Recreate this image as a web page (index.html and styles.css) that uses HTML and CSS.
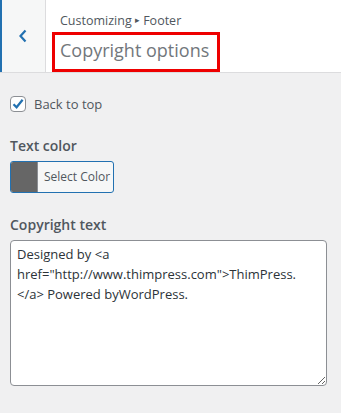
FILE: index.html
```html
<!DOCTYPE html>
<html lang="en">
<head>
    <meta charset="UTF-8">
    <title>Copyright options</title>
    <link rel="stylesheet" href="styles.css">
</head>
<body>
    <div class="section-header">
        <button class="back-btn" aria-label="Back">
            <svg width="10" height="14" viewBox="0 0 10 14"><path d="M7.5 1.5 L2.5 7 L7.5 12.5" fill="none" stroke="#2271b1" stroke-width="2.2"/></svg>
        </button>
        <div class="section-title">
            <span class="crumb">Customizing <span class="sep">&#9656;</span> Footer</span>
            <h3 class="title">Copyright options</h3>
        </div>
    </div>

    <div class="controls">
        <label class="check-row">
            <span class="checkbox">
                <svg width="14" height="14" viewBox="0 0 14 14"><path d="M2.5 7.2 L5.6 10.3 L11.6 2.8" fill="none" stroke="#2271b1" stroke-width="2.2"/></svg>
            </span>
            Back to top
        </label>

        <div class="control">
            <span class="control-title">Text color</span>
            <button class="color-btn">
                <span class="swatch"></span>
                <span class="color-label">Select Color</span>
            </button>
        </div>

        <div class="control">
            <span class="control-title">Copyright text</span>
            <textarea class="copy-text">Designed by &lt;a href="http://www.thimpress.com"&gt;ThimPress.&lt;/a&gt; Powered byWordPress.</textarea>
        </div>
    </div>
</body>
</html>
```

FILE: styles.css
```css
body {
    margin: 0;
    background: #f0f0f1;
    font-family: "Open Sans", sans-serif;
    font-size: 13px;
    color: #3c434a;
}

.section-header {
    display: flex;
    height: 72px;
    background: #fff;
    border-bottom: 1px solid #dcdcde;
}

.back-btn {
    width: 46px;
    padding: 0;
    border: none;
    border-left: 2px solid #2271b1;
    border-right: 1px solid #dcdcde;
    background: #f6f7f7;
    display: flex;
    align-items: center;
    justify-content: center;
    padding-right: 2px;
}

.section-title {
    display: flex;
    flex-direction: column;
    align-items: flex-start;
    padding-left: 6px;
}

.crumb {
    margin-top: 11px;
    padding-left: 8px;
    font-size: 12.5px;
    line-height: 18px;
    color: #50575e;
}

.sep {
    font-size: 9px;
    vertical-align: 2px;
}

.title {
    margin: 2px 0 0;
    padding: 2px 8px 5px 5px;
    border: 3px solid #ee0000;
    font-size: 18px;
    font-weight: 400;
    line-height: 27px;
    color: #72777c;
}

.controls {
    padding: 22px 10px 0;
}

.check-row {
    display: flex;
    align-items: center;
    gap: 8px;
    color: #50575e;
    margin-bottom: 23px;
}

.checkbox {
    width: 14px;
    height: 14px;
    border: 1px solid #8c8f94;
    border-radius: 4px;
    background: #fff;
    display: flex;
    align-items: center;
    justify-content: center;
}

.control {
    margin-bottom: 22px;
}

.control-title {
    display: block;
    font-size: 14px;
    font-weight: 600;
    line-height: 20px;
    color: #50575e;
    margin-bottom: 5px;
}

.color-btn {
    display: flex;
    height: 32px;
    padding: 0;
    border: 1px solid #2271b1;
    border-radius: 3px;
    background: #f6f7f7;
    overflow: hidden;
    font-family: inherit;
}

.swatch {
    width: 26px;
    height: 100%;
    background: #666;
    border-right: 1px solid #8c8f94;
}

.color-label {
    padding: 0 3px 0 6px;
    line-height: 30px;
    font-size: 12px;
    color: #50575e;
}

.copy-text {
    display: block;
    box-sizing: border-box;
    width: 317px;
    height: 146px;
    padding: 3px 6px;
    border: 1px solid #8c8f94;
    border-radius: 4px;
    font-family: inherit;
    font-size: 13px;
    line-height: 20px;
    color: #2c3338;
    resize: vertical;
}
```
